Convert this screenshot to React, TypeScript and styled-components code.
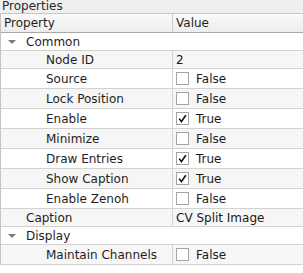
import styled, { createGlobalStyle } from "styled-components";

const GlobalStyle = createGlobalStyle`
  html, body {
    margin: 0;
    padding: 0;
    background: #ffffff;
  }
  body {
    font-family: "DejaVu Sans", sans-serif;
    font-size: 11px;
    color: #1e1e1e;
  }
`;

const Panel = styled.div`
  width: 303px;
  height: 273px;
  overflow: hidden;
  background: #ffffff;
`;

const TitleBar = styled.div`
  height: 13px;
  background: #efefef;
  padding-left: 2px;
  line-height: 12px;
  font-size: 12px;
  color: #2a2a2a;
  overflow: hidden;
`;

const Table = styled.div`
  border-left: 1px solid #c4c4c4;
  display: flex;
  flex-direction: column;
`;

const Header = styled.div`
  display: grid;
  grid-template-columns: 172px 1fr;
  height: 20px;
  box-sizing: border-box;
  border-top: 1px solid #c6c6c6;
  border-bottom: 1px solid #a9a9a9;
  background: linear-gradient(#fafafa, #ededed);
`;

const HeaderCell = styled.div<{ $divider?: boolean }>`
  padding-left: 3px;
  line-height: 18px;
  font-size: 12px;
  ${(p) => (p.$divider ? "border-right: 1px solid #cdcdcd;" : "")}
`;

const Row = styled.div<{ $tall?: boolean; $alt?: boolean }>`
  display: grid;
  grid-template-columns: 172px 1fr;
  height: ${(p) => (p.$tall ? 20 : 18)}px;
  box-sizing: border-box;
  border-bottom: 1px solid #d2d2d2;
  background: ${(p) => (p.$alt ? "#f6f6f6" : "#ffffff")};
`;

const GroupRow = styled.div<{ $alt?: boolean }>`
  display: flex;
  align-items: center;
  height: 18px;
  box-sizing: border-box;
  border-bottom: 1px solid #d2d2d2;
  background: ${(p) => (p.$alt ? "#f6f6f6" : "#ffffff")};
  padding-left: 7px;
  font-size: 12px;
`;

const Arrow = styled.span`
  width: 0;
  height: 0;
  border-left: 4px solid transparent;
  border-right: 4px solid transparent;
  border-top: 4px solid #7a7a7a;
  margin-right: 10px;
  margin-top: 1px;
`;

const NameCell = styled.div<{ $indent: number }>`
  display: flex;
  align-items: center;
  padding-left: ${(p) => p.$indent}px;
  border-right: 1px solid #d2d2d2;
  font-size: 12px;
  white-space: nowrap;
  overflow: hidden;
`;

const ValueCell = styled.div`
  display: flex;
  align-items: center;
  padding-left: 3px;
  font-size: 12px;
  white-space: nowrap;
  overflow: hidden;
  color: #1a1a1a;
`;

const Box = styled.span`
  width: 13px;
  height: 13px;
  box-sizing: border-box;
  border: 1px solid #a4a4a4;
  background: #ffffff;
  margin-right: 7px;
  display: flex;
  align-items: center;
  justify-content: center;
`;

function Check({ on }: { on: boolean }) {
  return (
    <Box>
      {on && (
        <svg width="9" height="9" viewBox="0 0 9 9">
          <path d="M1.2 4.6 L3.4 7.6 L7.8 1.2" fill="none" stroke="#111" strokeWidth="1.6" />
        </svg>
      )}
    </Box>
  );
}

type Prop = { name: string; bool?: boolean; text?: string; indent: number };

const common: Prop[] = [
  { name: "Node ID", text: "2", indent: 45 },
  { name: "Source", bool: false, indent: 45 },
  { name: "Lock Position", bool: false, indent: 45 },
  { name: "Enable", bool: true, indent: 45 },
  { name: "Minimize", bool: false, indent: 45 },
  { name: "Draw Entries", bool: true, indent: 45 },
  { name: "Show Caption", bool: true, indent: 45 },
  { name: "Enable Zenoh", bool: false, indent: 45 },
  { name: "Caption", text: "CV Split Image", indent: 25 },
];

function PropRow({ p, alt }: { p: Prop; alt: boolean }) {
  const isBool = p.bool !== undefined;
  return (
    <Row $tall={isBool} $alt={alt}>
      <NameCell $indent={p.indent}>{p.name}</NameCell>
      <ValueCell>
        {isBool && <Check on={!!p.bool} />}
        {isBool ? (p.bool ? "True" : "False") : p.text}
      </ValueCell>
    </Row>
  );
}

export default function App() {
  return (
    <Panel>
      <GlobalStyle />
      <TitleBar>Properties</TitleBar>
      <Table>
        <Header>
          <HeaderCell $divider>Property</HeaderCell>
          <HeaderCell>Value</HeaderCell>
        </Header>
        <GroupRow>
          <Arrow />
          Common
        </GroupRow>
        {common.map((p, i) => (
          <PropRow key={p.name} p={p} alt={i % 2 === 0} />
        ))}
        <GroupRow>
          <Arrow />
          Display
        </GroupRow>
        <PropRow p={{ name: "Maintain Channels", bool: false, indent: 45 }} alt />
      </Table>
    </Panel>
  );
}
